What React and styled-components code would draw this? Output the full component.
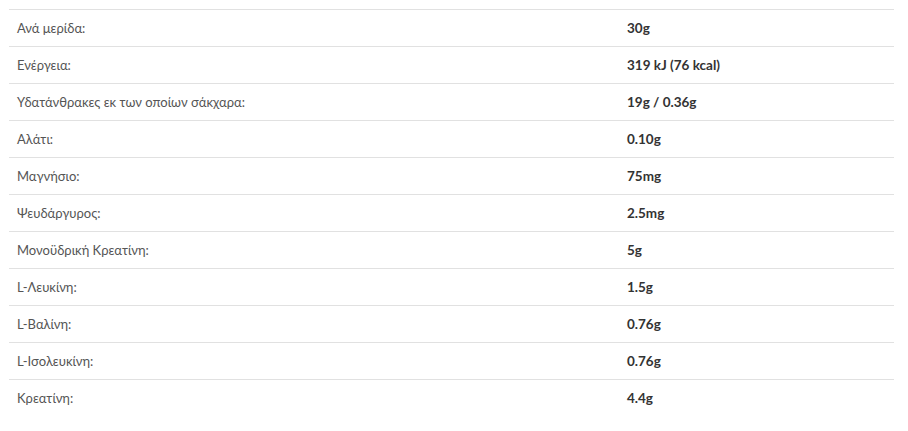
import styled, { createGlobalStyle } from 'styled-components';

const GlobalStyle = createGlobalStyle`
    body{
        margin:0;
        background:#fff;
        font-family:'Lato','Open Sans',sans-serif;
    }
`;

const data = [
    { label: 'Ανά μερίδα:', value: '30g' },
    { label: 'Ενέργεια:', value: '319 kJ (76 kcal)' },
    { label: 'Υδατάνθρακες εκ των οποίων σάκχαρα:', value: '19g / 0.36g' },
    { label: 'Αλάτι:', value: '0.10g' },
    { label: 'Μαγνήσιο:', value: '75mg' },
    { label: 'Ψευδάργυρος:', value: '2.5mg' },
    { label: 'Μονοϋδρική Κρεατίνη:', value: '5g' },
    { label: 'L-Λευκίνη:', value: '1.5g' },
    { label: 'L-Βαλίνη:', value: '0.76g' },
    { label: 'L-Ισολευκίνη:', value: '0.76g' },
    { label: 'Κρεατίνη:', value: '4.4g' },
];

const App = () => {
    return (
        <>
            <GlobalStyle />
            <Wrap>
                <Table>
                    <tbody>
                        {data.map((item, idx) => (
                            <Row key={idx}>
                                <Label>{item.label}</Label>
                                <Value>{item.value}</Value>
                            </Row>
                        ))}
                    </tbody>
                </Table>
            </Wrap>
        </>
    );
};

const Wrap = styled.div`
    padding:9px 14px 0 9px;
`;

const Table = styled.table`
    width:100%;
    border-collapse:collapse;
    table-layout:fixed;
    font-size:13px;
`;

const Row = styled.tr`
    height:37px;
    border-top:1px solid #e1e1e1;
`;

const Label = styled.td`
    box-sizing:border-box;
    width:610px;
    padding:0 8px;
    color:#555;
    vertical-align:middle;
`;

const Value = styled.td`
    padding:0 8px;
    color:#333;
    font-size:13.5px;
    font-weight:700;
    vertical-align:middle;
`;

export default App;
